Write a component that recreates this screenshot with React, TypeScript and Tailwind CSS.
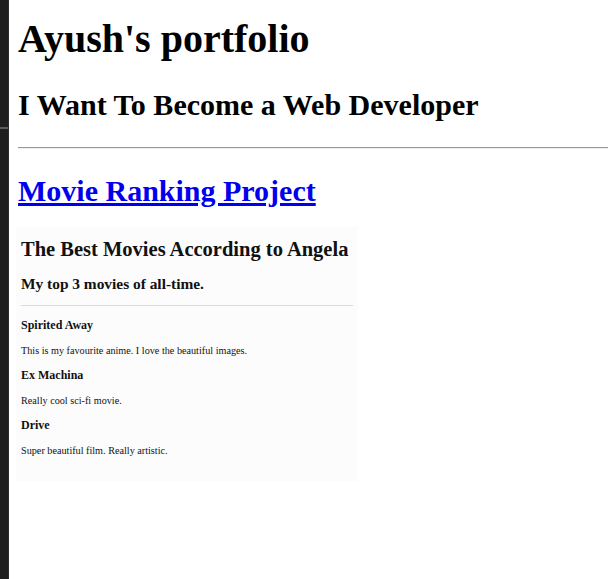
import React from 'react';

const MOVIES = [
  { title: 'Spirited Away', note: 'This is my favourite anime. I love the beautiful images.' },
  { title: 'Ex Machina', note: 'Really cool sci-fi movie.' },
  { title: 'Drive', note: 'Super beautiful film. Really artistic.' },
];

const MoviePreview: React.FC = () => {
  return (
    <div className="w-[342px] h-[255px] bg-[#fcfcfc] px-[5px] pt-[12.3px] text-[#111]">
      <h1 className="text-[20.5px] font-bold leading-[23.55px]">The Best Movies According to Angela</h1>
      <h2 className="mt-[13.1px] text-[15.4px] font-bold leading-[17.7px]">My top 3 movies of all-time.</h2>
      <div className="mt-[12.3px] h-px bg-[#dadada]" />
      <div className="mt-[13.5px] flex flex-col gap-[12.1px]">
        {MOVIES.map((m) => (
          <React.Fragment key={m.title}>
            <h3 className="text-[12px] font-bold leading-[13.8px]">{m.title}</h3>
            <p className="text-[10.2px] leading-[11.7px]">{m.note}</p>
          </React.Fragment>
        ))}
      </div>
    </div>
  );
};

export default function App() {
  return (
    <div className="flex min-h-screen bg-white text-black" style={{ fontFamily: '"Liberation Serif", "Times New Roman", serif' }}>
      <div className="w-[9px] shrink-0 flex flex-col bg-[#1e1e1e] border-r border-[#2b2b2b]">
        <div className="h-[127px]" />
        <div className="h-[2px] bg-[#5a5a5a]" />
      </div>
      <div className="flex-1 pl-[9px]">
        <h1 className="mt-[15.5px] text-[40px] font-bold leading-[46px]">Ayush's portfolio</h1>
        <h2 className="mt-[26px] text-[30px] font-bold leading-[34.5px]">I Want To Become a Web Developer</h2>
        <div className="mt-[24.9px]">
          <div className="h-px bg-[#9a9a9a]" />
          <div className="h-px bg-[#eeeeee]" />
        </div>
        <h2 className="mt-[25.6px] text-[30px] font-bold leading-[34.5px]">
          <a href="#" className="text-[#0000ee] underline">Movie Ranking Project</a>
        </h2>
        <div className="mt-[17px] -ml-[2px]">
          <MoviePreview />
        </div>
      </div>
    </div>
  );
}
